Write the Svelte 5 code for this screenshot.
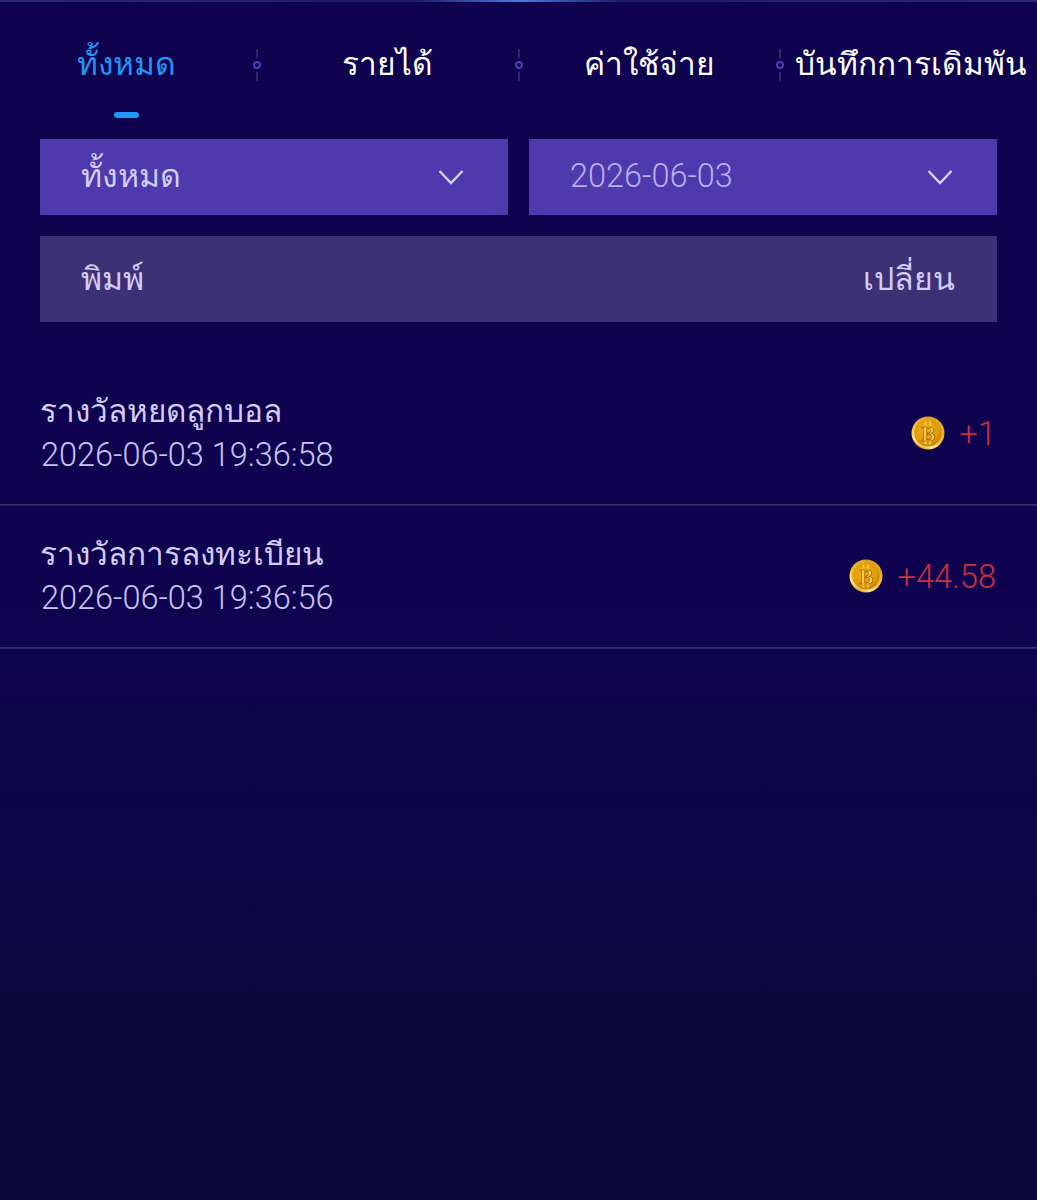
<script>
  const tabs = ['ทั้งหมด', 'รายได้', 'ค่าใช้จ่าย', 'บันทึกการเดิมพัน'];
  const records = [
    { title: 'รางวัลหยดลูกบอล', time: '2026-06-03 19:36:58', amount: '+1' },
    { title: 'รางวัลการลงทะเบียน', time: '2026-06-03 19:36:56', amount: '+44.58' }
  ];
</script>

<div class="page">
  <div class="topline"></div>

  <nav class="tabs">
    {#each tabs as tab, i}
      <div class="tab" class:active={i === 0}>
        <span class="label">{tab}</span>
        {#if i === 0}<span class="underline"></span>{/if}
        {#if i < 3}
          <span class="sep"><i></i><b></b><i></i></span>
        {/if}
      </div>
    {/each}
  </nav>

  <div class="filters">
    <div class="select thai">
      <span>ทั้งหมด</span>
      <svg width="26" height="16" viewBox="0 0 26 16"><path d="M1.5 2 13 14 24.5 2" fill="none" stroke="#d8d2f5" stroke-width="2.4"/></svg>
    </div>
    <div class="select date">
      <span>2026-06-03</span>
      <svg width="26" height="16" viewBox="0 0 26 16"><path d="M1.5 2 13 14 24.5 2" fill="none" stroke="#d8d2f5" stroke-width="2.4"/></svg>
    </div>
  </div>

  <div class="head">
    <span>พิมพ์</span>
    <span>เปลี่ยน</span>
  </div>

  <ul class="list">
    {#each records as r}
      <li>
        <div class="info">
          <div class="title">{r.title}</div>
          <div class="time">{r.time}</div>
        </div>
        <div class="amount">
          <svg class="coin" width="34" height="34" viewBox="0 0 34 34">
            <defs>
              <radialGradient id="face" cx="0.45" cy="0.4" r="0.7">
                <stop offset="0" stop-color="#f2b312"/>
                <stop offset="0.65" stop-color="#e09a0a"/>
                <stop offset="1" stop-color="#b06c04"/>
              </radialGradient>
              <linearGradient id="rim" x1="0.8" y1="0" x2="0.3" y2="1">
                <stop offset="0" stop-color="#d9981a"/>
                <stop offset="0.6" stop-color="#f3c53c"/>
                <stop offset="0.85" stop-color="#ffe98a"/>
                <stop offset="1" stop-color="#c98a12"/>
              </linearGradient>
            </defs>
            <circle cx="17" cy="17" r="16.5" fill="url(#rim)"/>
            <circle cx="17" cy="17" r="13.6" fill="url(#face)"/>
            <path d="M14.5 5.5v4M19 5.5v4M14.5 24.5v4M19 24.5v4" stroke="#f7cf52" stroke-width="1.5"/>
            <text x="17.2" y="24.6" text-anchor="middle" class="coin-b">B</text>
          </svg>
          <span>{r.amount}</span>
        </div>
      </li>
    {/each}
  </ul>
</div>

<style>
  :global(body) {
    margin: 0;
    background: #0d0740;
  }

  .page {
    height: 1200px;
    overflow: hidden;
    background: linear-gradient(#0f0350 0, #0f0350 600px, #0d0740 1000px);
    font-family: Roboto, "Noto Sans", "Liberation Sans", sans-serif;
    font-weight: 300;
  }

  .topline {
    height: 2px;
    background: linear-gradient(90deg, #2a2a72 0, #1c1c6a 40%, #3f7fe0 50%, #1c1c6a 60%, #2a2a72 100%);
  }

  .tabs {
    display: grid;
    grid-template-columns: repeat(4, 261.5px);
    margin-left: -4.5px;
    height: 137px;
  }

  .tab {
    position: relative;
    display: flex;
    justify-content: center;
    padding-top: 40px;
    height: 97px;
    color: #fff;
    font-size: 31.6px;
    line-height: 46px;
    font-weight: 300;
    white-space: nowrap;
  }

  .tab.active {
    color: #2196f3;
  }

  .underline {
    position: absolute;
    left: 118.5px;
    top: 110px;
    width: 25px;
    height: 6px;
    border-radius: 3px;
    background: #2196f3;
  }

  .sep {
    position: absolute;
    right: 0;
    top: 47px;
    width: 8px;
    margin-right: -4px;
    display: flex;
    flex-direction: column;
    align-items: center;
  }

  .sep i {
    width: 2px;
    height: 9px;
    background: #2f2476;
  }

  .sep b {
    width: 8px;
    height: 8px;
    margin: 3px 0;
    box-sizing: border-box;
    border: 2px solid #5439b8;
    border-radius: 50%;
  }

  .filters {
    display: grid;
    grid-template-columns: 468px 468px;
    gap: 21px;
    margin: 0 40px 21px;
  }

  .select {
    height: 76px;
    display: flex;
    align-items: center;
    justify-content: space-between;
    padding: 0 44px 0 41px;
    box-sizing: border-box;
    background: #4e3aad;
    font-size: 32px;
    color: #d3cdf6;
  }

  .select span {
    margin-bottom: 4px;
  }

  .select.date {
    color: #b9aff0;
    font-size: 32.5px;
  }

  .select.date span {
    margin-bottom: 2px;
  }

  .head {
    height: 86px;
    display: flex;
    align-items: center;
    justify-content: space-between;
    padding: 0 42px 2px 41px;
    box-sizing: border-box;
    margin: 0 40px;
    background: #3d3176;
    color: #d3cdf6;
    font-size: 32px;
  }

  .list {
    list-style: none;
    margin: 40px 0 0;
    padding: 0;
  }

  li {
    height: 142px;
    display: flex;
    align-items: center;
    justify-content: space-between;
    padding: 0 41px 0 41px;
    border-bottom: 1px solid #363064;
    box-shadow: 0 1px 0 #2a2560;
  }

  .title {
    color: #d3cdf6;
    font-size: 31.5px;
    line-height: 43px;
    margin-left: -1px;
  }

  .time {
    color: #c9c3f0;
    font-size: 32.5px;
    line-height: 43px;
    margin-top: 1px;
  }

  .amount {
    display: flex;
    align-items: center;
    gap: 15px;
    color: #c9303f;
    font-size: 32.6px;
  }

  .amount span {
    margin-top: 1px;
  }

  .coin-b {
    font-family: "Liberation Serif", serif;
    font-weight: 700;
    font-size: 21px;
    fill: #f9cf4a;
    stroke: #8f5a05;
    stroke-width: 0.7px;
  }
</style>
